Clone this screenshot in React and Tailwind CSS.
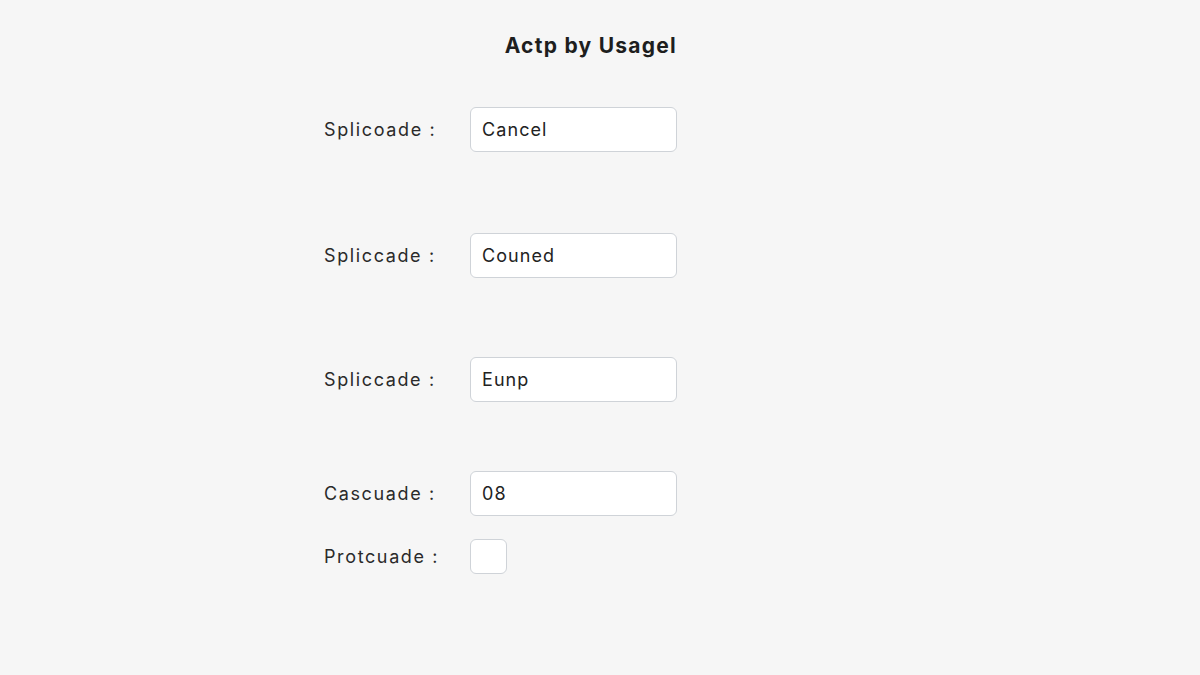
import React from "react";

const Field = ({ label, value, className = "" }) => (
  <div className={`flex items-center ${className}`}>
    <label className="w-[146px] text-[18px] tracking-[0.09em] text-[#2a2a2a]">
      {label}
    </label>
    <div className="flex items-center w-[207px] h-[45px] px-[11px] bg-white border border-[#cfd3d8] rounded-md text-[18px] tracking-[0.06em] text-[#222]">
      {value}
    </div>
  </div>
);

export default function App() {
  return (
    <div
      className="min-h-screen w-full bg-[#f6f6f6] pt-[31px]"
      style={{ fontFamily: "Inter, 'Noto Sans', sans-serif" }}
    >
      <div className="ml-[324px] w-[353px] flex flex-col">
        <h1 className="text-right text-[21px] leading-[30px] font-bold text-[#1e1e1e] tracking-[0.06em]">
          Actp by Usagel
        </h1>

        <Field label="Splicoade :" value="Cancel" className="mt-[46px]" />
        <Field label="Spliccade :" value="Couned" className="mt-[81px]" />
        <Field label="Spliccade :" value="Eunp" className="mt-[79px]" />
        <Field label="Cascuade :" value="08" className="mt-[69px]" />

        <div className="flex items-center mt-[23px]">
          <label className="w-[146px] text-[18px] tracking-[0.09em] text-[#2a2a2a]">
            Protcuade :
          </label>
          <div className="w-[37px] h-[35px] bg-white border border-[#cfd3d8] rounded-md" />
        </div>
      </div>
    </div>
  );
}
